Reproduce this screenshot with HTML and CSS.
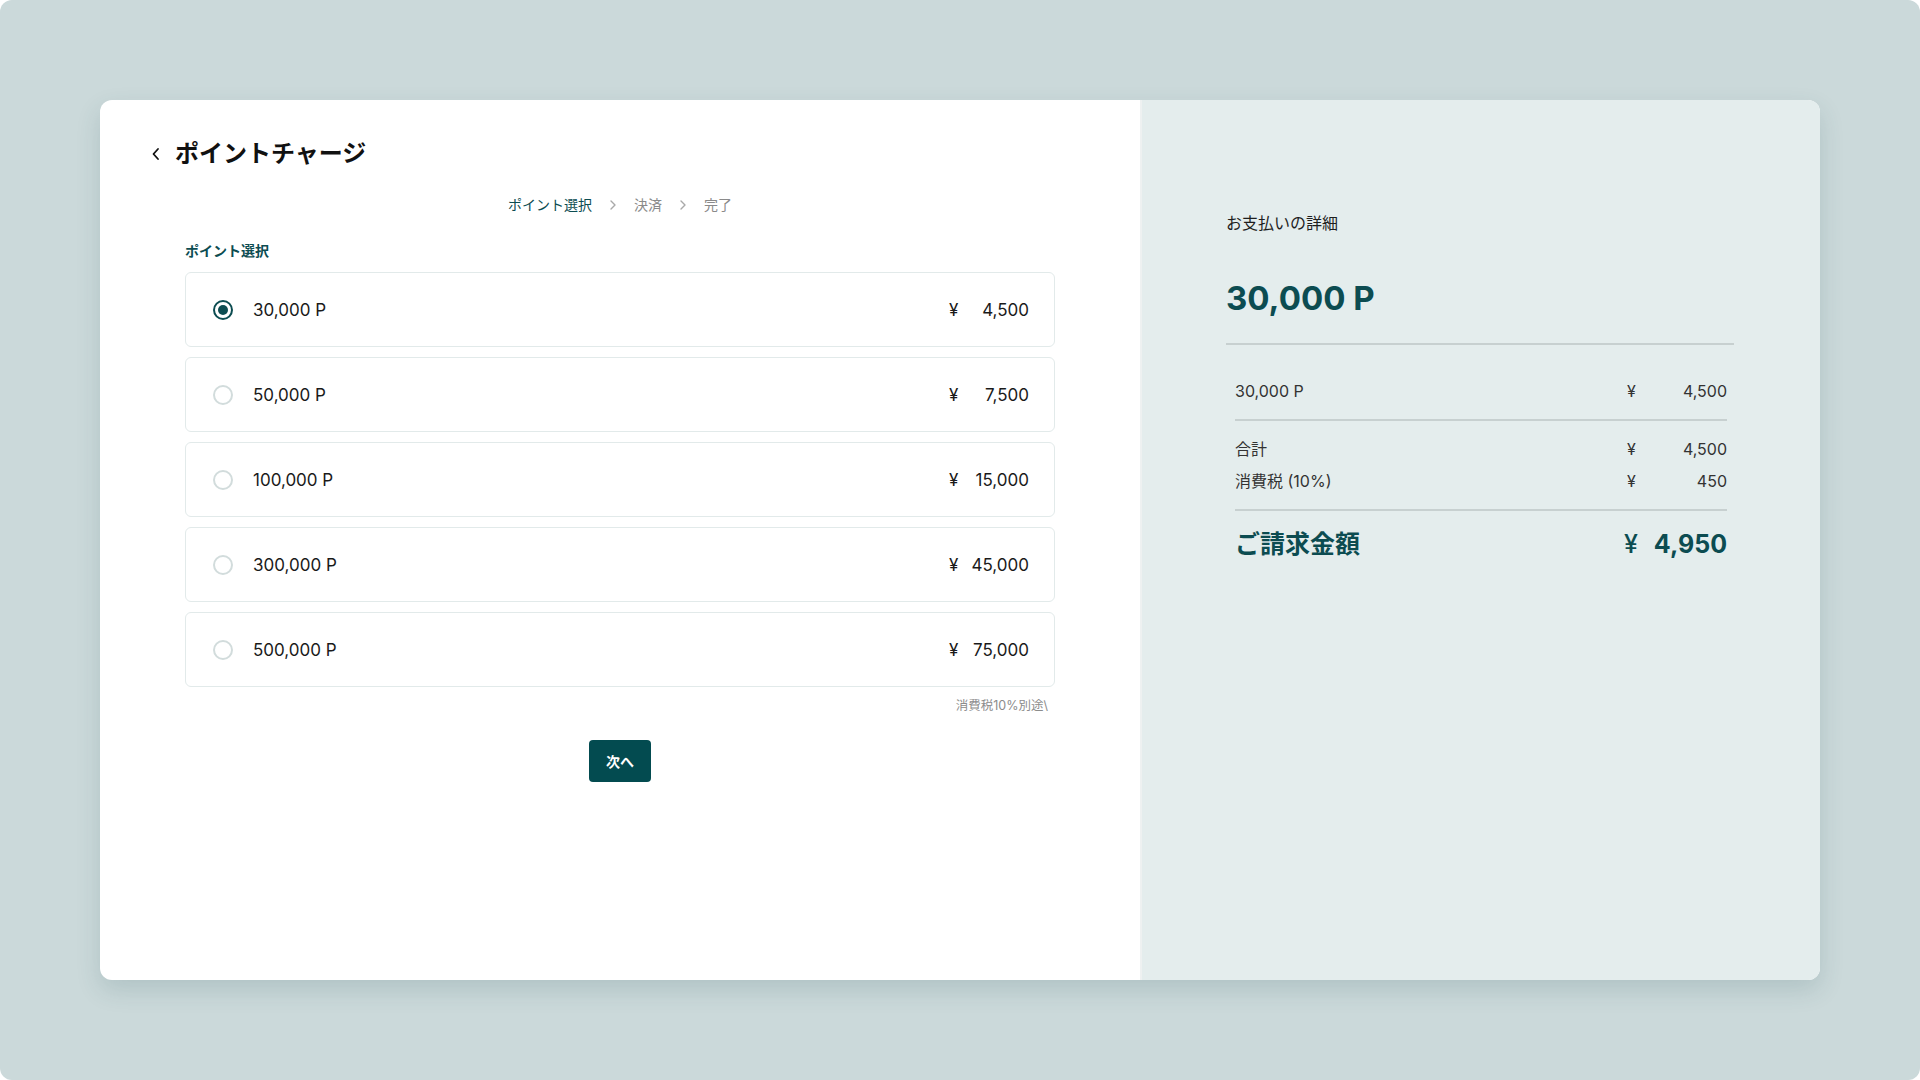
FILE: index.html
```html
<!DOCTYPE html>
<html lang="ja">
<head>
<meta charset="utf-8">
<title>ポイントチャージ</title>
<link rel="stylesheet" href="styles.css">
</head>
<body>
<div class="screen">
  <main class="card">
    <section class="charge">
      <header class="charge-head">
        <button class="back" type="button" aria-label="戻る">
          <svg width="10" height="14" viewBox="0 0 10 14"><path d="M7 2 L2.5 7 L7 12" fill="none" stroke="#111" stroke-width="1.8" stroke-linecap="round" stroke-linejoin="round"/></svg>
        </button>
        <h1 class="title">ポイントチャージ</h1>
      </header>

      <nav class="steps">
        <span class="step is-active">ポイント選択</span>
        <svg class="step-sep" width="8" height="12" viewBox="0 0 8 12"><path d="M2 2 L6 6 L2 10" fill="none" stroke="#a9a9a9" stroke-width="1.4" stroke-linecap="round" stroke-linejoin="round"/></svg>
        <span class="step">決済</span>
        <svg class="step-sep" width="8" height="12" viewBox="0 0 8 12"><path d="M2 2 L6 6 L2 10" fill="none" stroke="#a9a9a9" stroke-width="1.4" stroke-linecap="round" stroke-linejoin="round"/></svg>
        <span class="step">完了</span>
      </nav>

      <div class="field-label">ポイント選択</div>

      <ul class="plans">
        <li class="plan is-selected">
          <span class="radio"></span>
          <span class="plan-name">30,000 P</span>
          <span class="yen">¥</span><span class="plan-price">4,500</span>
        </li>
        <li class="plan">
          <span class="radio"></span>
          <span class="plan-name">50,000 P</span>
          <span class="yen">¥</span><span class="plan-price">7,500</span>
        </li>
        <li class="plan">
          <span class="radio"></span>
          <span class="plan-name">100,000 P</span>
          <span class="yen">¥</span><span class="plan-price">15,000</span>
        </li>
        <li class="plan">
          <span class="radio"></span>
          <span class="plan-name">300,000 P</span>
          <span class="yen">¥</span><span class="plan-price">45,000</span>
        </li>
        <li class="plan">
          <span class="radio"></span>
          <span class="plan-name">500,000 P</span>
          <span class="yen">¥</span><span class="plan-price">75,000</span>
        </li>
      </ul>

      <p class="tax-note">消費税10%別途\</p>

      <div class="actions">
        <button class="next" type="button">次へ</button>
      </div>
    </section>

    <aside class="summary">
      <div class="summary-head">
        <div class="summary-title">お支払いの詳細</div>
        <div class="summary-points">30,000 P</div>
      </div>
      <div class="summary-body">
        <div class="group group-first">
          <div class="line"><span class="line-label">30,000 P</span><span class="line-yen">¥</span><span class="line-amount">4,500</span></div>
        </div>
        <div class="group">
          <div class="line"><span class="line-label">合計</span><span class="line-yen">¥</span><span class="line-amount">4,500</span></div>
          <div class="line"><span class="line-label">消費税 (10%)</span><span class="line-yen">¥</span><span class="line-amount">450</span></div>
        </div>
        <div class="total">
          <span class="total-label">ご請求金額</span>
          <span class="total-yen">¥</span>
          <span class="total-amount">4,950</span>
        </div>
      </div>
    </aside>
  </main>
</div>
</body>
</html>
```

FILE: styles.css
```css
html {
  background: #ffffff;
}

body {
  margin: 0;
  font-family: "Inter", "Noto Sans CJK JP", sans-serif;
  color: #1a1a1a;
}

.screen {
  height: 1080px;
  box-sizing: border-box;
  padding: 100px;
  background: #cbd9da;
  border-radius: 12px;
}

.card {
  display: flex;
  height: 880px;
  border-radius: 12px;
  overflow: hidden;
  background: #ffffff;
  box-shadow: 0 10px 24px rgba(40, 80, 90, 0.16);
}

/* left: plan selection */
.charge {
  width: 1040px;
  flex: none;
  box-sizing: border-box;
  padding: 36px 85px 0;
  display: flex;
  flex-direction: column;
}

.charge-head {
  display: flex;
  align-items: center;
  margin: 0 -35px;
  height: 36px;
}

.back {
  width: 12px;
  height: 16px;
  padding: 0;
  margin: 0 13px 0 0;
  border: 0;
  background: none;
  display: flex;
  align-items: center;
  justify-content: center;
}

.title {
  margin: 0;
  font-size: 24px;
  line-height: 36px;
  font-weight: 700;
  color: #111111;
}

.steps {
  margin-top: 23px;
  display: flex;
  justify-content: center;
  align-items: center;
  gap: 17px;
  font-size: 14px;
  line-height: 20px;
  color: #8a8a8a;
}

.step.is-active {
  color: #0c4c51;
}

.field-label {
  margin-top: 26px;
  font-size: 14px;
  line-height: 20px;
  font-weight: 700;
  color: #0c4c51;
}

.plans {
  list-style: none;
  margin: 11px 0 0;
  padding: 0;
  display: flex;
  flex-direction: column;
  gap: 10px;
}

.plan {
  height: 75px;
  box-sizing: border-box;
  display: flex;
  align-items: center;
  padding: 0 25px 0 27px;
  border: 1px solid #e2eaea;
  border-radius: 6px;
  font-size: 17px;
  color: #1a1a1a;
}

.radio {
  width: 20px;
  height: 20px;
  box-sizing: border-box;
  border: 2px solid #d2dcdc;
  border-radius: 50%;
  margin-right: 20px;
  display: flex;
  align-items: center;
  justify-content: center;
}

.is-selected .radio {
  border-color: #0c4c51;
}

.is-selected .radio::after {
  content: "";
  width: 10px;
  height: 10px;
  border-radius: 50%;
  background: #0c4c51;
}

.plan-name {
  flex: 1;
}

.yen {
  width: 12px;
}

.plan-price {
  width: 68px;
  text-align: right;
}

.tax-note {
  margin: 11px 7px 0 0;
  text-align: right;
  font-size: 12.5px;
  line-height: 16px;
  color: #8c8c8c;
}

.actions {
  margin-top: 26px;
  display: flex;
  justify-content: center;
}

.next {
  height: 42px;
  padding: 0 17px;
  border: 0;
  border-radius: 4px;
  background: #034b50;
  color: #ffffff;
  font-family: inherit;
  font-size: 14px;
  font-weight: 700;
}

/* right: payment summary */
.summary {
  flex: 1;
  box-sizing: border-box;
  padding: 111px 86px 0 84px;
  background: #e4eded;
  border-left: 2px solid #eef1f1;
}

.summary-head {
  border-bottom: 2px solid #c7d0d0;
  padding-bottom: 24px;
}

.summary-title {
  font-size: 16px;
  line-height: 24px;
  color: #1e1e1e;
}

.summary-points {
  margin-top: 43px;
  font-size: 33px;
  line-height: 41px;
  font-weight: 700;
  color: #0c4c51;
}

.summary-body {
  padding: 0 7px 0 9px;
}

.group {
  display: flex;
  flex-direction: column;
  gap: 8px;
  padding: 16px 0;
  border-bottom: 2px solid #c7d0d0;
}

.group-first {
  padding-top: 34px;
}

.line {
  display: flex;
  align-items: center;
  font-size: 16px;
  line-height: 24px;
  color: #333333;
}

.line-label {
  flex: 1;
}

.line-yen {
  width: 12px;
}

.line-amount {
  width: 88px;
  text-align: right;
}

.total {
  display: flex;
  align-items: center;
  padding-top: 17px;
  font-size: 25px;
  line-height: 32px;
  font-weight: 700;
  color: #0c4c51;
}

.total-label {
  flex: 1;
}

.total-yen {
  margin-right: 16px;
  font-weight: 500;
}
```
